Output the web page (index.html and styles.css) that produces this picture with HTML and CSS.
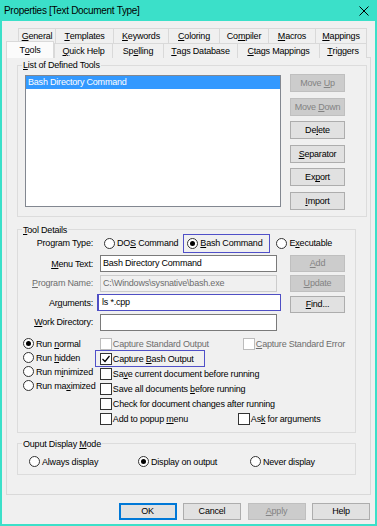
FILE: index.html
```html
<!DOCTYPE html>
<html>
<head>
<meta charset="utf-8">
<link rel="stylesheet" href="styles.css">
</head>
<body>
<div class="window">
  <div class="titlebar">
    <span class="title">Properties [Text Document Type]</span>
    <svg class="close" width="10" height="10" viewBox="0 0 10 10"><path d="M0.5 0.5L9.5 9.5M9.5 0.5L0.5 9.5" stroke="#000" stroke-width="1" fill="none"/></svg>
  </div>
  <div class="tabs">
    <div class="tabrow back">
      <div class="tab"><u>G</u>eneral</div>
      <div class="tab"><u>T</u>emplates</div>
      <div class="tab"><u>K</u>eywords</div>
      <div class="tab"><u>C</u>oloring</div>
      <div class="tab">Co<u>m</u>piler</div>
      <div class="tab"><u>M</u>acros</div>
      <div class="tab"><u>M</u>appings</div>
    </div>
    <div class="tabrow front">
      <div class="tab selected">T<u>o</u>ols</div>
      <div class="tab"><u>Q</u>uick Help</div>
      <div class="tab">Sp<u>e</u>lling</div>
      <div class="tab"><u>T</u>ags Database</div>
      <div class="tab"><u>C</u>tags Mappings</div>
      <div class="tab"><u>T</u>riggers</div>
    </div>
  </div>
  <div class="panel">
    <fieldset class="group list-group">
      <legend><u>L</u>ist of Defined Tools</legend>
      <div class="list-body">
        <div class="listbox">
          <div class="list-item selected">Bash Directory Command</div>
        </div>
        <div class="btn-col">
          <button class="btn" disabled>Move <u>U</u>p</button>
          <button class="btn" disabled>Move <u>D</u>own</button>
          <button class="btn">De<u>l</u>ete</button>
          <button class="btn"><u>S</u>eparator</button>
          <button class="btn">Ex<u>p</u>ort</button>
          <button class="btn"><u>I</u>mport</button>
        </div>
      </div>
    </fieldset>

    <fieldset class="group details">
      <legend><u>T</u>ool Details</legend>
      <div class="form-grid">
        <div class="lbl">Program Type:</div>
        <div class="radio-row">
          <div class="radio"><span class="rb"></span><span>DO<u>S</u> Command</span></div>
          <div class="radio annot-r"><span class="rb on"></span><span><u>B</u>ash Command</span></div>
          <div class="radio exe"><span class="rb"></span><span>E<u>x</u>ecutable</span></div>
        </div>

        <div class="lbl"><u>M</u>enu Text:</div>
        <div class="field">Bash Directory Command</div>
        <button class="btn" disabled><u>A</u>dd</button>

        <div class="lbl dis"><u>P</u>rogram Name:</div>
        <div class="field dis">C:\Windows\sysnative\bash.exe</div>
        <button class="btn" disabled><u>U</u>pdate</button>

        <div class="lbl">Ar<u>g</u>uments:</div>
        <div class="field focus">ls *.cpp</div>
        <button class="btn find"><u>F</u>ind...</button>

        <div class="lbl"><u>W</u>ork Directory:</div>
        <div class="field"></div>
      </div>

      <div class="lower">
        <div class="run-col">
          <div class="radio run"><span class="rb on"></span><span>Run <u>n</u>ormal</span></div>
          <div class="radio run"><span class="rb"></span><span>Run <u>h</u>idden</span></div>
          <div class="radio run"><span class="rb"></span><span>Run m<u>i</u>nimized</span></div>
          <div class="radio run"><span class="rb"></span><span>Run ma<u>x</u>imized</span></div>
        </div>
        <div class="check-grid">
          <div class="check dis"><span class="cb"></span><span>Capture Standard Output</span></div>
          <div class="check dis err"><span class="cb"></span><span><u>C</u>apture Standard Error</span></div>
          <div class="check annot full"><span class="cb"><svg width="10" height="10" viewBox="0 0 10 10"><path d="M1.5 5L4 7.5L8.5 2" fill="none" stroke="#000" stroke-width="1.2"/></svg></span><span>Capture <u>B</u>ash Output</span></div>
          <div class="check full"><span class="cb"></span><span>Sa<u>v</u>e current document before running</span></div>
          <div class="check full"><span class="cb"></span><span>Save all documents <u>b</u>efore running</span></div>
          <div class="check full"><span class="cb"></span><span>Check for document changes after running</span></div>
          <div class="check"><span class="cb"></span><span>Add to popup <u>m</u>enu</span></div>
          <div class="check"><span class="cb"></span><span>As<u>k</u> for arguments</span></div>
        </div>
      </div>
    </fieldset>

    <fieldset class="group output">
      <legend>Ouput Display <u>M</u>ode</legend>
      <div class="out-row">
        <div class="radio"><span class="rb"></span><span>Always display</span></div>
        <div class="radio"><span class="rb on"></span><span>Display on output</span></div>
        <div class="radio"><span class="rb"></span><span>Never display</span></div>
      </div>
    </fieldset>
  </div>

  <div class="footer">
    <button class="btn fbtn default">OK</button>
    <button class="btn fbtn">Cancel</button>
    <button class="btn fbtn" disabled><u>A</u>pply</button>
    <button class="btn fbtn">Help</button>
  </div>
</div>
</body>
</html>
```

FILE: styles.css
```css
* { box-sizing: border-box; }
html, body { margin: 0; padding: 0; }
body {
  width: 377px;
  height: 526px;
  background: #f0f0f0;
  font-family: "Liberation Sans", Arial, sans-serif;
  font-size: 9px;
  letter-spacing: -0.2px;
  color: #000;
}
u { text-underline-offset: 1px; }

.window {
  width: 377px;
  height: 526px;
  border: 2px solid #3be0c9;
  border-top: 0;
  background: #f0f0f0;
  display: flex;
  flex-direction: column;
}

.titlebar {
  height: 21px;
  flex: none;
  background: #3be0c9;
  padding: 0 6px 0 2px;
  display: flex;
  align-items: center;
  justify-content: space-between;
}
.title {
  font-size: 10px;
  letter-spacing: -0.3px;
}

/* tabs */
.tabs { margin-top: 7px; flex: none; }
.tabrow { display: grid; }
.tabrow.back {
  margin-left: 16px;
  height: 15px;
  grid-template-columns: 37px 58px 55px 51px 49px 47px 52px;
}
.tabrow.front {
  margin-left: 4px;
  height: 14px;
  grid-template-columns: 48px 58px 51px 74px 82px 48px;
  position: relative;
  z-index: 1;
}
.tab {
  border: 1px solid #d9d9d9;
  border-bottom: 0;
  border-right: 0;
  background: #f0f0f0;
  display: flex;
  align-items: center;
  justify-content: center;
  white-space: nowrap;
  height: 100%;
}
.tab:last-child { border-right: 1px solid #d9d9d9; }
.tab.selected {
  align-self: start;
  background: #fbfbfb;
  height: 17px;
  margin-top: -2px;
  border-right: 1px solid #d9d9d9;
}

/* panel */
.panel {
  flex: none;
  margin-left: 4px;
  width: 365px;
  height: 438px;
  border: 1px solid #d9d9d9;
  padding: 3px 0 0 10px;
  background: #f0f0f0;
}

.group {
  margin: 0;
  border: 1px solid #dcdcdc;
  min-width: 0;
}
.group legend {
  height: 8px;
  line-height: 8px;
  padding: 0 1px;
  white-space: nowrap;
}

/* list group */
.list-group {
  width: 350px;
  padding: 6px 20px 6px 7px;
}
.list-group legend { margin-left: -3px; }
.list-body { display: flex; }
.listbox {
  width: 256px;
  height: 132px;
  border: 1px solid #828790;
  background: #fff;
}
.list-item {
  height: 13px;
  line-height: 13px;
  padding-left: 2px;
  white-space: nowrap;
}
.list-item.selected { background: #3399ff; color: #fff; }
.btn-col {
  margin-left: 9px;
  margin-top: -1px;
  display: flex;
  flex-direction: column;
  gap: 5.6px;
}

.btn {
  width: 55px;
  height: 18px;
  padding: 0;
  margin: 0;
  border: 1px solid #adadad;
  background: #e1e1e1;
  font: inherit;
  letter-spacing: inherit;
  color: #000;
  text-align: center;
  line-height: 16px;
  white-space: nowrap;
  appearance: none;
  -webkit-appearance: none;
}
.btn:disabled {
  background: #cccccc;
  border-color: #bfbfbf;
  color: #838383;
}

/* details */
.details {
  width: 339px;
  margin-top: 9px;
  padding: 0 10px 5.5px 5px;
}
.details legend { margin-left: -1px; }
.form-grid {
  display: grid;
  grid-template-columns: 77px 190px 55px;
  grid-template-rows: 19px 17px 17px 17px 17px;
  row-gap: 2.5px;
  align-items: center;
}
.lbl {
  text-align: right;
  padding-right: 7px;
  white-space: nowrap;
}
.lbl.dis { color: #6d6d6d; }
.form-grid .btn { height: 17px; line-height: 15px; }
.form-grid .btn.find { margin-top: 3px; }
.field {
  width: 177px;
  height: 17px;
  border: 1px solid #7a7a7a;
  background: #fff;
  padding-left: 2px;
  line-height: 15px;
  white-space: nowrap;
  overflow: hidden;
}
.field.dis {
  background: #f0f0f0;
  border-color: #cccccc;
  color: #6d6d6d;
}
.field.focus {
  width: 184px;
  margin-left: -3px;
  padding-left: 4px;
  border-color: #4f4fc4;
  box-shadow: inset 1px 0 0 #4f4fc4;
}

.radio-row {
  grid-column: 2 / 4;
  display: flex;
  align-items: center;
  height: 19px;
  padding-left: 4px;
}
.radio {
  display: flex;
  align-items: center;
  gap: 2px;
  white-space: nowrap;
}
.annot-r {
  height: 19px;
  border: 1px solid #5050c8;
  margin-left: 5px;
  padding: 0 7px 0 3px;
}
.radio.exe { margin-left: 6px; }

.rb {
  flex: none;
  width: 11px;
  height: 11px;
  border: 1px solid #333;
  border-radius: 50%;
  background: #fff;
  display: flex;
  align-items: center;
  justify-content: center;
}
.rb.on::after {
  content: "";
  width: 5px;
  height: 5px;
  border-radius: 50%;
  background: #000;
}

.lower {
  display: flex;
  margin-top: 5.5px;
}
.run-col {
  width: 77px;
  padding-top: 0.5px;
  display: flex;
  flex-direction: column;
}
.radio.run { height: 14px; }

.check-grid {
  display: grid;
  grid-template-columns: 138px auto;
  grid-auto-rows: 15px;
  align-items: center;
}
.check {
  display: flex;
  align-items: center;
  gap: 1px;
  white-space: nowrap;
}
.check.full { grid-column: 1 / 3; }
.check.err { margin-left: 5px; }
.check.dis { color: #6d6d6d; }
.check.dis .cb { border-color: #bcbcbc; }
.check.annot {
  justify-self: start;
  width: 110px;
  height: 17px;
  margin-left: -5px;
  padding-left: 4px;
  border: 1px solid #5050c8;
}
.cb {
  flex: none;
  width: 12px;
  height: 12px;
  border: 1px solid #333;
  background: #fff;
  display: flex;
  align-items: center;
  justify-content: center;
}

/* output */
.output {
  width: 339px;
  margin-top: 7px;
  padding: 7px 0 5px 11px;
}
.output legend { margin-left: -7px; }
.out-row {
  display: grid;
  grid-template-columns: 109px 112px auto;
  height: 14px;
  align-items: center;
}

/* footer */
.footer {
  display: flex;
  justify-content: flex-end;
  gap: 6.5px;
  margin-top: 8px;
  padding-right: 5px;
}
.fbtn { width: 58px; height: 17px; line-height: 15px; }
.fbtn.default {
  border-color: #0078d7;
  box-shadow: inset 0 0 0 1px #0078d7;
}
```
